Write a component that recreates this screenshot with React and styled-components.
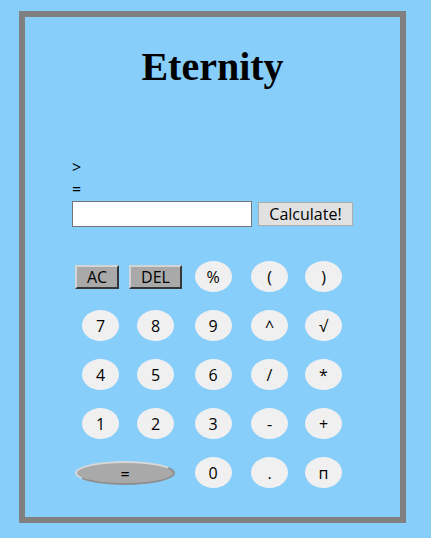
import React from 'react'
import styled, { createGlobalStyle } from 'styled-components'

const GlobalStyle = createGlobalStyle`
  html, body {
    margin: 0;
    padding: 0;
    background: #87cefa;
  }
  body {
    font-family: "Open Sans", "Liberation Sans", sans-serif;
  }
`

const keys = [
  ['%', '(', ')'],
  ['7', '8', '9', '^', '√'],
  ['4', '5', '6', '/', '*'],
  ['1', '2', '3', '-', '+'],
]

const App = () => {
  return (
    <>
      <GlobalStyle />
      <Frame>
        <Title>Eternity</Title>
        <Screen>
          <Line>&gt;</Line>
          <Line>=</Line>
          <InputRow>
            <Field type="text" />
            <CalcButton>Calculate!</CalcButton>
          </InputRow>
        </Screen>
        <Keypad>
          <GrayKey shift={7}>AC</GrayKey>
          <GrayKey>DEL</GrayKey>
          {keys[0].map(k => (
            <Key key={k}>{k}</Key>
          ))}
          {keys.slice(1).map(row =>
            row.map(k => <Key key={k}>{k}</Key>)
          )}
          <EqualsKey>=</EqualsKey>
          <Key>0</Key>
          <Key>.</Key>
          <Key>п</Key>
        </Keypad>
      </Frame>
    </>
  )
}
export default App

const Frame = styled.div`
  box-sizing: border-box;
  width: 387px;
  height: 512px;
  margin: 11px 0 0 19px;
  border: 6px solid #808080;
  padding: 27px 0 0 47px;
`

const Title = styled.h1`
  margin: 0 0 0 -47px;
  font-family: "Liberation Serif", "Times New Roman", serif;
  font-size: 40px;
  font-weight: bold;
  line-height: 46px;
  text-align: center;
  color: #000;
`

const Screen = styled.div`
  margin-top: 66px;
`

const Line = styled.div`
  font-size: 16px;
  line-height: 22px;
  color: #000;
`

const InputRow = styled.div`
  display: flex;
  align-items: center;
  gap: 6px;
  margin-top: 1px;
`

const Field = styled.input`
  box-sizing: border-box;
  width: 180px;
  height: 26px;
  margin: 0;
  border: 1px solid #767676;
  background: #fff;
  padding: 2px 3px;
`

const CalcButton = styled.button`
  box-sizing: border-box;
  width: 95px;
  height: 24px;
  margin: 0;
  padding: 0;
  border: 1px solid #adadad;
  background: #e1e1e1;
  font-family: "Open Sans", "Liberation Sans", sans-serif;
  font-size: 16px;
  line-height: 20px;
  color: #000;
`

const Keypad = styled.div`
  display: grid;
  grid-template-columns: 55px 55px 60px 53px 55px;
  grid-auto-rows: 31px;
  row-gap: 18px;
  align-items: center;
  justify-items: center;
  margin: 34px 0 0 1px;
`

const Key = styled.button`
  box-sizing: border-box;
  width: 37px;
  height: 31px;
  margin: 0;
  padding: 0;
  border: none;
  border-radius: 50%;
  background: #f0f0f0;
  font-family: "Open Sans", "Liberation Sans", sans-serif;
  font-size: 16px;
  color: #000;
`

const GrayKey = styled.button`
  box-sizing: border-box;
  height: 24px;
  margin: 0 ${p => p.shift || 0}px 0 0;
  padding: 0 10px;
  border: 2px outset #d4d4d4;
  border-right-color: #8a8a8a;
  border-bottom-color: #8a8a8a;
  background: #a9a9a9;
  font-family: "Open Sans", "Liberation Sans", sans-serif;
  font-size: 16px;
  line-height: 18px;
  color: #000;
`

const EqualsKey = styled.button`
  grid-column: span 2;
  box-sizing: border-box;
  width: 100px;
  height: 24px;
  margin: 0 6px 0 0;
  padding: 0;
  border: 2px solid #d8d8d8;
  border-bottom-color: #8f8f8f;
  border-right-color: #8f8f8f;
  border-radius: 50%;
  background: #a9a9a9;
  font-family: "Open Sans", "Liberation Sans", sans-serif;
  font-size: 16px;
  color: #000;
`
